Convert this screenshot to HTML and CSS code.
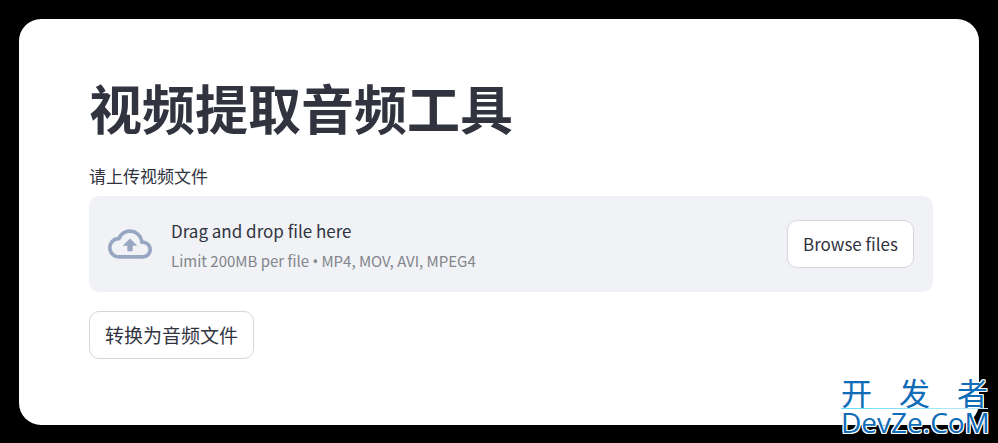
FILE: index.html
```html
<!DOCTYPE html>
<html lang="zh-CN">
<head>
<meta charset="utf-8">
<meta name="viewport" content="width=device-width, initial-scale=1">
<title>视频提取音频工具</title>
<link rel="stylesheet" href="styles.css">
</head>
<body>
<main class="card">
  <h1 class="title">视频提取音频工具</h1>
  <label class="label" for="browse">请上传视频文件</label>
  <section class="dropzone">
    <svg class="cloud" viewBox="0 0 24 24" aria-hidden="true"><path d="M19.35 10.04A7.49 7.49 0 0012 4C9.11 4 6.6 5.64 5.35 8.04A5.994 5.994 0 000 14c0 3.31 2.69 6 6 6h13c2.76 0 5-2.24 5-5 0-2.64-2.05-4.78-4.65-4.96zM19 18H6c-2.21 0-4-1.79-4-4 0-2.05 1.53-3.76 3.56-3.97l1.07-.11.5-.95A5.469 5.469 0 0112 6c2.62 0 4.88 1.86 5.39 4.43l.3 1.5 1.53.11A2.98 2.98 0 0122 15c0 1.65-1.35 3-3 3zM8 13h2.55v3h2.9v-3H16l-4-4-4 4z"/></svg>
    <div class="hint">
      <span class="hint-main">Drag and drop file here</span>
      <small class="hint-limit">Limit 200MB per file <span class="bullet">•</span> MP4, MOV, AVI, MPEG4</small>
    </div>
    <button class="button button-browse" id="browse" type="button">Browse files</button>
  </section>
  <button class="button button-convert" type="button">转换为音频文件</button>
</main>
<div class="watermark">
  <div class="watermark-name"><span>开</span><span>发</span><span>者</span></div>
  <div class="watermark-rule"></div>
  <div class="watermark-site">DevZe.CoM</div>
</div>
</body>
</html>
```
FILE: styles.css
```css
* {
  box-sizing: border-box;
}

body {
  margin: 0;
  padding: 19px;
  background: #000;
  color: #31333f;
  font-family: "Noto Sans CJK SC", sans-serif;
}

.card {
  display: flex;
  flex-direction: column;
  align-items: flex-start;
  padding: 54px 46px 66px 70px;
  border-radius: 22px;
  background: #fff;
}

.title {
  margin: 0 0 23px;
  font-size: 53px;
  line-height: 68px;
  font-weight: 700;
}

.label {
  margin-bottom: 8px;
  font-size: 17px;
  line-height: 24px;
}

.dropzone {
  display: flex;
  align-items: center;
  align-self: stretch;
  margin-bottom: 19px;
  padding: 18px 19px;
  border-radius: 10px;
  background: #f0f2f6;
}

.cloud {
  width: 44px;
  height: 44px;
  margin-right: 19px;
  flex: none;
  fill: #97a6c3;
}

.hint {
  display: flex;
  flex: 1;
  flex-direction: column;
}

.hint-main {
  font-size: 17px;
  line-height: 34px;
}

.hint-limit {
  color: #83858c;
  font-size: 15px;
  line-height: 25px;
}

.bullet {
  font-family: "Noto Sans", sans-serif;
}

.button {
  height: 48px;
  padding: 0 15px 2px;
  border: 1px solid #d6d6d9;
  border-radius: 10px;
  background: #fff;
  color: inherit;
  font-family: inherit;
}

.button-browse {
  font-size: 17px;
}

.button-convert {
  font-size: 19px;
}

.watermark {
  position: absolute;
  right: 10px;
  bottom: 7px;
  width: 147px;
  color: #0f6cb8;
  text-shadow: 1px 0 #fff, -1px 0 #fff, 0 1px #fff, 0 -1px #fff,
    1px 1px #fff, -1px 1px #fff, 1px -1px #fff, -1px -1px #fff;
}

.watermark-name {
  display: flex;
  justify-content: space-between;
  font-size: 31px;
  line-height: 33px;
}

.watermark-rule {
  position: relative;
  z-index: 1;
  height: 1px;
  background: linear-gradient(90deg, #5fdcf5, #c4ecfa);
}

.watermark-site {
  font-family: "Open Sans", sans-serif;
  font-size: 28px;
  line-height: 27px;
}
```
